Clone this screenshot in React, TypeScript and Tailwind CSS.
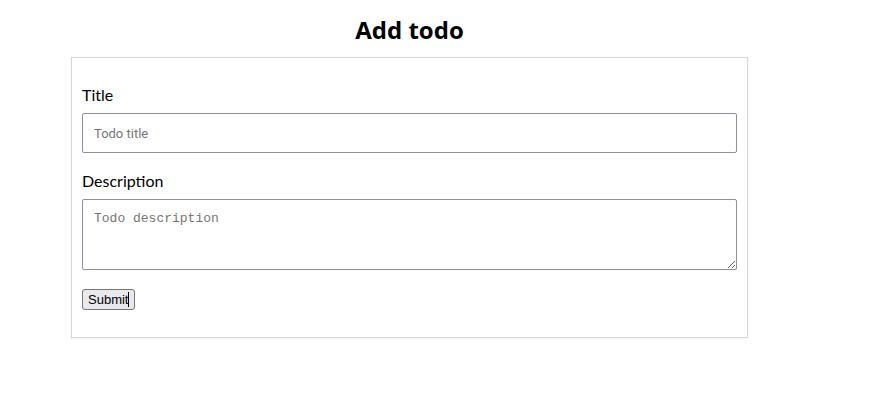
import React, { useState } from 'react';

const App: React.FC = () => {
  const [title, setTitle] = useState('');
  const [description, setDescription] = useState('');

  return (
    <div className="w-[881px] h-[406px] bg-white text-black font-['Segoe_UI','Lato','Open_Sans',sans-serif]">
      <div className="w-[677px] ml-[71px]">
        <h1 className="pt-[14px] h-[57px] text-center text-[24px] leading-[32px] font-bold font-['Open_Sans',sans-serif]">
          Add todo
        </h1>
        <form
          className="border border-[#d6d6d6] shadow-[0_1px_2px_rgba(0,0,0,0.06)] px-[10px] pt-[26px] pb-[27px]"
          onSubmit={(e) => e.preventDefault()}
        >
          <label className="block text-[16px] leading-[22px] mb-[7px]">Title</label>
          <input
            value={title}
            onChange={(e) => setTitle(e.target.value)}
            placeholder="Todo title"
            className="block w-full h-[40px] px-[11px] border border-[#8f8f9d] rounded-[2px] text-[13px] font-['Roboto',sans-serif] placeholder:text-[#757575] outline-none"
          />
          <label className="block mt-[17px] text-[16px] leading-[22px] mb-[7px]">
            Description
          </label>
          <textarea
            value={description}
            onChange={(e) => setDescription(e.target.value)}
            placeholder="Todo description"
            className="block w-full h-[71px] px-[11px] pt-[9px] border border-[#8f8f9d] rounded-[2px] text-[13px] font-['Liberation_Mono',monospace] placeholder:text-[#757575] outline-none resize-y"
          />
          <button
            type="submit"
            className="mt-[19px] h-[21px] px-[5px] border border-[#767676] rounded-[3px] bg-[#e9e9ed] text-[13px] leading-[19px] font-['Liberation_Sans',Arial,sans-serif] flex items-center"
          >
            Submit<span className="inline-block w-px h-[15px] bg-black" />
          </button>
        </form>
      </div>
    </div>
  );
};

export default App;
